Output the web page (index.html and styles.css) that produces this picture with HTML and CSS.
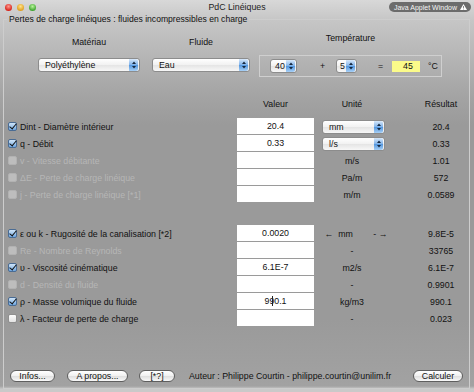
FILE: index.html
```html
<!DOCTYPE html>
<html lang="fr">
<head>
  <meta charset="UTF-8" />
  <title>PdC Linéiques</title>
  <link rel="stylesheet" href="styles.css">
</head>
<body>
  <div class="window">
    <div class="titlebar">
      <div class="lights">
        <span class="light red"></span>
        <span class="light yellow"></span>
        <span class="light green"></span>
      </div>
      <div class="title">PdC Linéiques</div>
      <div class="badge">Java Applet Window
        <svg width="7" height="6" viewBox="0 0 7 6"><path d="M3.5 0 L7 6 L0 6 Z" fill="#fff"/><rect x="3.1" y="2" width="0.8" height="2" fill="#6a6a6a"/><rect x="3.1" y="4.6" width="0.8" height="0.8" fill="#6a6a6a"/></svg>
      </div>
    </div>

    <div class="frame">
      <fieldset class="group">
        <legend>Pertes de charge linéiques : fluides incompressibles en charge</legend>

        <div class="setup">
          <div class="col material">
            <div class="cap">Matériau</div>
            <div class="combo w-mat">Polyéthylène<span class="spin"><svg width="4" height="8" viewBox="0 0 4 8"><path d="M0 3 L2 0.5 L4 3 Z M0 5 L2 7.5 L4 5 Z" fill="#16283f"/></svg></span></div>
          </div>
          <div class="col fluid">
            <div class="cap">Fluide</div>
            <div class="combo w-fl">Eau<span class="spin"><svg width="4" height="8" viewBox="0 0 4 8"><path d="M0 3 L2 0.5 L4 3 Z M0 5 L2 7.5 L4 5 Z" fill="#16283f"/></svg></span></div>
          </div>
          <div class="col temp">
            <div class="cap">Température</div>
            <div class="tempbox">
              <div class="combo w-t1">40<span class="spin"><svg width="4" height="8" viewBox="0 0 4 8"><path d="M0 3 L2 0.5 L4 3 Z M0 5 L2 7.5 L4 5 Z" fill="#16283f"/></svg></span></div>
              <span class="op">+</span>
              <div class="combo w-t2">5<span class="spin"><svg width="4" height="8" viewBox="0 0 4 8"><path d="M0 3 L2 0.5 L4 3 Z M0 5 L2 7.5 L4 5 Z" fill="#16283f"/></svg></span></div>
              <span class="op op-eq">=</span>
              <span class="sum">45</span>
              <span class="deg">°C</span>
            </div>
          </div>
        </div>

        <div class="heads">
          <span></span>
          <span>Valeur</span>
          <span>Unité</span>
          <span class="res">Résultat</span>
        </div>

        <div class="rows">
          <label class="lab"><span class="cb on"></span>Dint - Diamètre intérieur</label>
          <div class="val">20.4</div>
          <div class="unit"><div class="combo w-un">mm<span class="spin"><svg width="4" height="8" viewBox="0 0 4 8"><path d="M0 3 L2 0.5 L4 3 Z M0 5 L2 7.5 L4 5 Z" fill="#16283f"/></svg></span></div></div>
          <div class="res">20.4</div>

          <label class="lab"><span class="cb on"></span>q - Débit</label>
          <div class="val">0.33</div>
          <div class="unit"><div class="combo w-un">l/s<span class="spin"><svg width="4" height="8" viewBox="0 0 4 8"><path d="M0 3 L2 0.5 L4 3 Z M0 5 L2 7.5 L4 5 Z" fill="#16283f"/></svg></span></div></div>
          <div class="res">0.33</div>

          <label class="lab off"><span class="cb"></span>v - Vitesse débitante</label>
          <div class="val"></div>
          <div class="unit">m/s</div>
          <div class="res">1.01</div>

          <label class="lab off"><span class="cb"></span>ΔE - Perte de charge linéique</label>
          <div class="val"></div>
          <div class="unit">Pa/m</div>
          <div class="res">572</div>

          <label class="lab off"><span class="cb"></span>j - Perte de charge linéique [*1]</label>
          <div class="val"></div>
          <div class="unit">m/m</div>
          <div class="res">0.0589</div>
        </div>

        <div class="rows second">
          <label class="lab"><span class="cb on"></span>ε ou k - Rugosité de la canalisation [*2]</label>
          <div class="val">0.0020</div>
          <div class="unit"><div class="arrows"><span>←&nbsp;&nbsp;mm</span><span>- →</span></div></div>
          <div class="res">9.8E-5</div>

          <label class="lab off"><span class="cb"></span>Re - Nombre de Reynolds</label>
          <div class="val"></div>
          <div class="unit">-</div>
          <div class="res">33765</div>

          <label class="lab"><span class="cb on"></span>υ - Viscosité cinématique</label>
          <div class="val">6.1E-7</div>
          <div class="unit">m2/s</div>
          <div class="res">6.1E-7</div>

          <label class="lab off"><span class="cb"></span>d - Densité du fluide</label>
          <div class="val"></div>
          <div class="unit">-</div>
          <div class="res">0.9901</div>

          <label class="lab"><span class="cb on"></span>ρ - Masse volumique du fluide</label>
          <div class="val">990.1<span class="ibeam"></span></div>
          <div class="unit">kg/m3</div>
          <div class="res">990.1</div>

          <label class="lab"><span class="cb"></span>λ - Facteur de perte de charge</label>
          <div class="val"></div>
          <div class="unit">-</div>
          <div class="res">0.023</div>
        </div>

        <div class="footer">
          <button class="btn w-info">Infos...</button>
          <button class="btn w-apropos">A propos...</button>
          <button class="btn w-help">[*?]</button>
          <span class="author">Auteur : Philippe Courtin - philippe.courtin@unilim.fr</span>
          <button class="btn w-calc">Calculer</button>
        </div>
      </fieldset>
    </div>
  </div>
</body>
</html>
```

FILE: styles.css
```css
* {
  box-sizing: border-box;
}
body {
  margin: 0;
  font-family: "Liberation Sans", Arial, sans-serif;
  font-size: 8.8px;
  color: #111;
}
.window {
  width: 474px;
  height: 392px;
  display: flex;
  flex-direction: column;
  overflow: hidden;
  background: linear-gradient(#d8d8d8 0, #c6c6c6 20px, #a4a4a4 95px, #9a9a9a 125px, #9a9a9a 320px, #a2a2a2 386px, #c9c9c9 389px);
}
.titlebar {
  height: 14px;
  display: grid;
  grid-template-columns: 1fr auto 1fr;
  align-items: center;
}
.lights {
  display: flex;
  gap: 5px;
  padding-left: 5px;
}
.light {
  width: 7px;
  height: 7px;
  border-radius: 50%;
}
.red { background: radial-gradient(circle at 50% 35%, #ff9a90, #d8231a 70%); }
.yellow { background: radial-gradient(circle at 50% 35%, #ffe38a, #e0a020 70%); }
.green { background: radial-gradient(circle at 50% 35%, #b8f59a, #3fa530 70%); }
.title {
  color: #222;
}
.badge {
  justify-self: end;
  margin-right: 3px;
  height: 10px;
  padding: 0 4px 0 5px;
  border-radius: 5px;
  background: #6c6c6c;
  color: #f4f4f4;
  font-size: 7px;
  display: flex;
  align-items: center;
  gap: 3px;
}

.frame {
  flex: 1;
  display: flex;
  padding: 0 4px 3px 3px;
}
.group {
  flex: 1;
  margin: 0;
  padding: 0;
  border: 1px solid #cdcdcd;
  min-width: 0;
}
.group legend {
  padding: 0 2px;
  margin-left: 3px;
  line-height: 10px;
  font-size: 8.6px;
  color: #111;
}

.setup {
  display: flex;
  align-items: flex-end;
  height: 53px;
  padding-left: 34px;
}
.col {
  display: flex;
  flex-direction: column;
  align-items: center;
}
.material { width: 102px; padding-bottom: 5px; }
.fluid { width: 98px; margin-left: 12px; padding-bottom: 5px; }
.temp { width: 183px; margin-left: 9px; }
.cap {
  line-height: 10px;
  margin-bottom: 11px;
}
.temp .cap { margin-bottom: 12px; }

.combo {
  height: 14px;
  display: flex;
  align-items: center;
  padding-left: 6px;
  border: 1px solid #8c8c8c;
  border-radius: 3px;
  background: linear-gradient(#ffffff, #f1f1f1 50%, #e4e4e4 50%, #f7f7f7);
  color: #111;
}
.spin {
  margin-left: auto;
  width: 9px;
  height: 12px;
  margin-right: 1px;
  display: flex;
  align-items: center;
  justify-content: center;
  border-radius: 0 2px 2px 0;
  background: linear-gradient(#d7e8fa, #7fb2ea 50%, #4f94de 50%, #a8d0f6);
}
.w-mat { width: 102px; }
.w-fl { width: 98px; }
.w-t1 { width: 27px; padding-left: 4px; }
.w-t2 { width: 21px; padding-left: 3px; }
.w-un { width: 63px; margin-left: 8px; }

.tempbox {
  width: 183px;
  height: 22px;
  display: flex;
  align-items: center;
  padding-left: 10px;
  border: 1px solid #cfcfcf;
}
.op {
  width: 39px;
  padding-left: 12px;
  text-align: center;
}
.op-eq { width: 35px; }
.sum {
  width: 28px;
  height: 11px;
  line-height: 11px;
  text-align: center;
  background: #fbfb8a;
  padding-left: 4px;
}
.deg { margin-left: 8px; }

.heads,
.rows {
  display: grid;
  grid-template-columns: 233px 77px 76px 80px;
}
.heads {
  margin-top: 22px;
  line-height: 10px;
  margin-bottom: 9px;
  text-align: center;
}
.rows {
  grid-auto-rows: 17px;
}
.rows.second {
  margin-top: 22px;
}
.lab {
  display: flex;
  align-items: center;
  padding-left: 4px;
  gap: 3px;
  color: #111;
}
.lab.off {
  color: #b6b6b6;
}
.cb {
  width: 9px;
  height: 9px;
  border: 1px solid #8f8f8f;
  border-radius: 2px;
  background: linear-gradient(#fdfdfd, #e2e2e2);
  position: relative;
}
.lab.off .cb {
  border-color: #b2b2b2;
  background: #bdbdbd;
}
.cb.on {
  border-color: #4a6c94;
  background: linear-gradient(#cfe4f8, #6ea7e2);
}
.cb.on::after {
  content: "";
  position: absolute;
  left: 2px;
  top: -1px;
  width: 3px;
  height: 6px;
  border-right: 1.5px solid #111;
  border-bottom: 1.5px solid #111;
  transform: rotate(40deg);
}
.val {
  height: 16px;
  background: #fff;
  text-align: center;
  line-height: 16px;
  color: #111;
  position: relative;
}
.ibeam {
  position: absolute;
  left: 35px;
  top: 3px;
  width: 1px;
  height: 10px;
  background: #222;
}
.unit {
  display: flex;
  align-items: center;
  justify-content: center;
}
.unit:has(.combo) {
  justify-content: flex-start;
}
.arrows {
  width: 63px;
  margin-left: 8px;
  display: flex;
  justify-content: space-between;
}
.res {
  padding-left: 22px;
  display: flex;
  align-items: center;
  justify-content: center;
}

.footer {
  margin-top: 43px;
  display: flex;
  align-items: center;
  padding-left: 6px;
  padding-right: 6px;
}
.btn {
  height: 12px;
  padding: 0;
  font: inherit;
  color: #111;
  border: 1px solid #5e5e5e;
  border-radius: 6px;
  background: linear-gradient(#ffffff, #f0f0f0 50%, #dedede 50%, #f8f8f8);
}
.w-info { width: 45px; }
.w-apropos { width: 61px; margin-left: 12px; }
.w-help { width: 36px; margin-left: 11px; }
.author { margin-left: 14px; color: #111; }
.w-calc { width: 50px; margin-left: auto; }
```
